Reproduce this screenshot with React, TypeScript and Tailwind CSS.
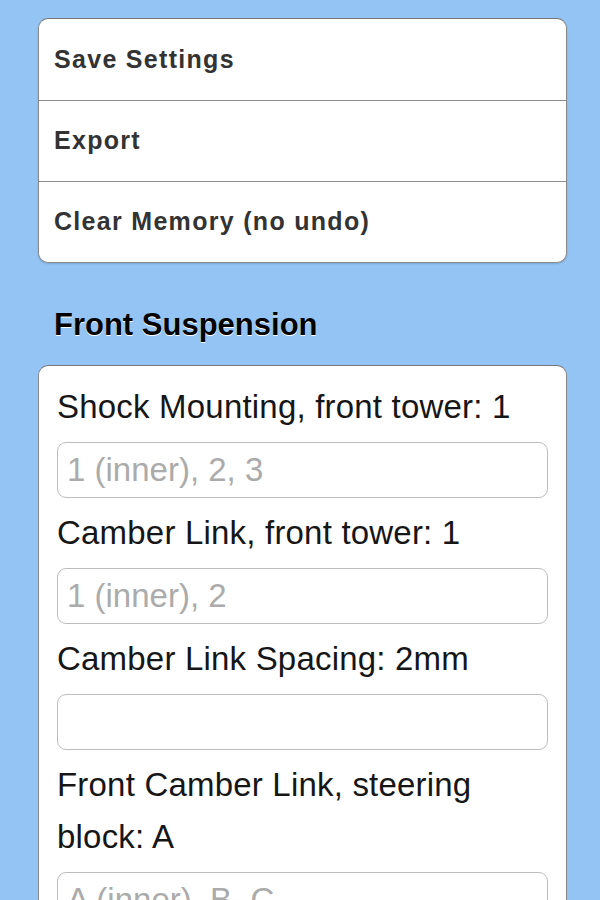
import React from "react";

const fields: { label: string; placeholder: string }[] = [
  { label: "Shock Mounting, front tower: 1", placeholder: "1 (inner), 2, 3" },
  { label: "Camber Link, front tower: 1", placeholder: "1 (inner), 2" },
  { label: "Camber Link Spacing: 2mm", placeholder: "" },
  { label: "Front Camber Link, steering block: A", placeholder: "A (inner), B, C" },
  { label: "Rear Camber Link, steering block: A", placeholder: "A (inner), B, C" },
];

export default function App() {
  return (
    <div
      className="h-[900px] w-[600px] overflow-hidden bg-[#94c4f4]"
      style={{ fontFamily: '"Liberation Sans", Arial, sans-serif' }}
    >
      <div className="ml-[38px] w-[529px] pt-[18px]">
        <div className="flex flex-col overflow-hidden rounded-[10px] border border-[#8a8a8a] border-t-[#777] bg-white shadow-[0_1px_2px_rgba(0,0,0,0.15)]">
          {["Save Settings", "Export", "Clear Memory (no undo)"].map((t, i) => (
            <div
              key={t}
              className={`flex h-[81px] items-center pl-[15px] text-[25px] font-bold tracking-[1.3px] text-[#333] ${
                i > 0 ? "border-t border-[#8c8c8c]" : ""
              }`}
            >
              {t}
            </div>
          ))}
        </div>

        <h2 className="mt-[42px] pl-[16px] text-[31px] font-bold leading-[40px] text-black [text-shadow:0_1px_0_#fff]">
          Front Suspension
        </h2>

        <div className="mt-[20px] flex flex-col rounded-[10px] border border-[#888] border-t-[#777] bg-white px-[18px] pt-[15px] pb-[20px]">
          {fields.map((f) => (
            <div key={f.label} className="flex flex-col">
              <label className="mb-[9px] text-[33px] leading-[52px] tracking-[0.2px] text-[#161616]">
                {f.label}
              </label>
              <input
                type="text"
                placeholder={f.placeholder}
                className="mb-[9px] h-[56px] w-full rounded-[9px] border-[1.5px] border-[#bdbdbd] bg-white px-[9px] text-[33px] text-[#222] outline-none placeholder:text-[#ababab]"
                style={{ fontFamily: '"Liberation Sans", Arial, sans-serif' }}
              />
            </div>
          ))}
        </div>
      </div>
    </div>
  );
}
